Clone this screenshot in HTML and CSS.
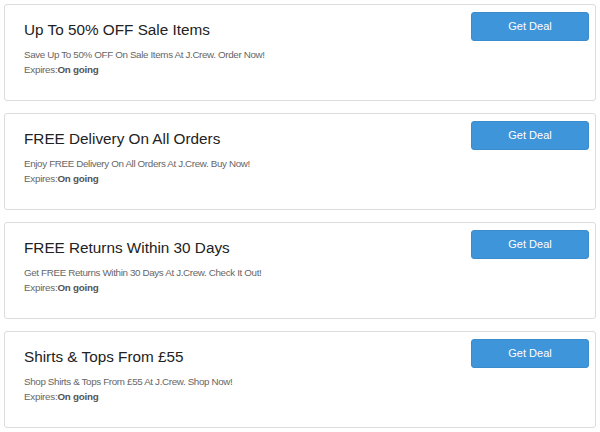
FILE: index.html
```html
<!DOCTYPE html>
<html>
<head>
<meta charset="utf-8">
<link rel="stylesheet" href="styles.css">
</head>
<body>
<div class="list">
  <div class="card">
    <div class="info">
      <h2 class="title">Up To 50% OFF Sale Items</h2>
      <p class="desc">Save Up To 50% OFF On Sale Items At J.Crew. Order Now!</p>
      <p class="exp">Expires:<b>On going</b></p>
    </div>
    <a class="btn">Get Deal</a>
  </div>
  <div class="card">
    <div class="info">
      <h2 class="title">FREE Delivery On All Orders</h2>
      <p class="desc">Enjoy FREE Delivery On All Orders At J.Crew. Buy Now!</p>
      <p class="exp">Expires:<b>On going</b></p>
    </div>
    <a class="btn">Get Deal</a>
  </div>
  <div class="card">
    <div class="info">
      <h2 class="title">FREE Returns Within 30 Days</h2>
      <p class="desc">Get FREE Returns Within 30 Days At J.Crew. Check It Out!</p>
      <p class="exp">Expires:<b>On going</b></p>
    </div>
    <a class="btn">Get Deal</a>
  </div>
  <div class="card">
    <div class="info">
      <h2 class="title">Shirts &amp; Tops From £55</h2>
      <p class="desc">Shop Shirts &amp; Tops From £55 At J.Crew. Shop Now!</p>
      <p class="exp">Expires:<b>On going</b></p>
    </div>
    <a class="btn">Get Deal</a>
  </div>
</div>
</body>
</html>
```

FILE: styles.css
```css
* { box-sizing: border-box; }
html, body { margin: 0; padding: 0; background: #fff; }
body { font-family: "Liberation Sans", Arial, sans-serif; }
.list {
  display: flex;
  flex-direction: column;
  gap: 12px;
  padding: 4px 4px 0 4px;
}
.card {
  height: 97px;
  border: 1px solid #dcdcdc;
  border-radius: 3px;
  display: flex;
  justify-content: space-between;
  align-items: flex-start;
  padding: 7px 6px 0 19px;
}
.info { padding-top: 8px; }
.title {
  margin: 0;
  font-size: 15.3px;
  font-weight: normal;
  color: #222;
  line-height: 20px;
}
.desc {
  margin: 7px 0 0 0;
  font-size: 9.8px;
  letter-spacing: -0.35px;
  line-height: 15px;
  color: #666;
}
.exp {
  margin: 0;
  font-size: 9.8px;
  letter-spacing: -0.25px;
  line-height: 15px;
  color: #666;
}
.exp b { color: #555; }
.btn {
  width: 118px;
  height: 29px;
  background: #3e95d9;
  border: 1px solid #3a8ccc;
  border-radius: 3px;
  color: #fff;
  font-size: 11px;
  display: flex;
  align-items: center;
  justify-content: center;
  padding-bottom: 2px;
}
```
